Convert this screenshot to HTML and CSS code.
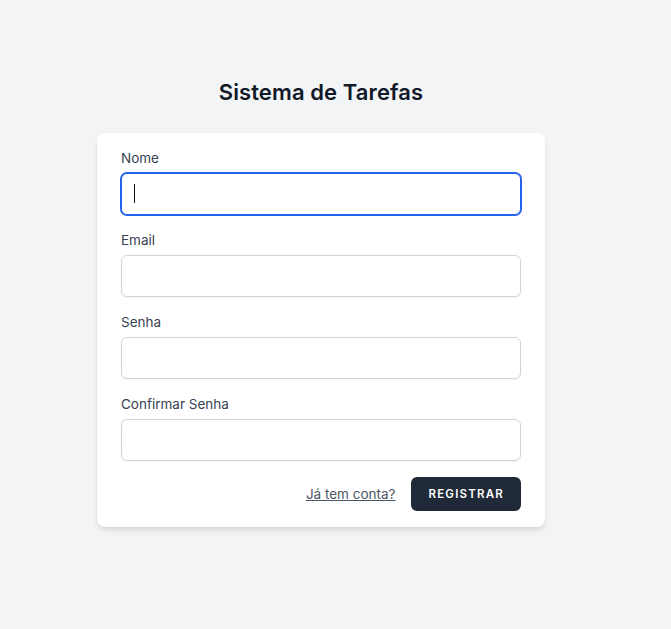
FILE: index.html
```html
<!DOCTYPE html>
<html lang="pt">
<head>
<meta charset="utf-8">
<title>Sistema de Tarefas</title>
<link rel="stylesheet" href="styles.css">
</head>
<body>
<div class="page">
  <h1 class="title">Sistema de Tarefas</h1>
  <form class="card">
    <div class="field">
      <label class="label" for="name">Nome</label>
      <input class="input input-focus" id="name" type="text">
    </div>
    <div class="field">
      <label class="label" for="email">Email</label>
      <input class="input" id="email" type="email">
    </div>
    <div class="field">
      <label class="label" for="password">Senha</label>
      <input class="input" id="password" type="password">
    </div>
    <div class="field">
      <label class="label" for="password2">Confirmar Senha</label>
      <input class="input" id="password2" type="password">
    </div>
    <div class="actions">
      <a class="link" href="#">Já tem conta?</a>
      <button class="btn" type="button">Registrar</button>
    </div>
  </form>
</div>
</body>
</html>
```

FILE: styles.css
```css
* { box-sizing: border-box; }
html, body { margin: 0; padding: 0; }
body {
  background: #f3f4f6;
  font-family: Inter, "Noto Sans", sans-serif;
  color: #111827;
  min-height: 629px;
}
.page {
  width: 642px;
  display: flex;
  flex-direction: column;
  align-items: center;
  padding-top: 77px;
}
.title {
  margin: 0 0 24px;
  font-size: 22px;
  line-height: 31px;
  font-weight: 600;
  color: #111827;
  letter-spacing: 0.1px;
}
.card {
  width: 448px;
  background: #fff;
  border-radius: 8px;
  box-shadow: 0 4px 6px -1px rgba(0,0,0,0.1), 0 2px 4px -2px rgba(0,0,0,0.1);
  padding: 16px 24px;
  margin-top: 1px;
  display: flex;
  flex-direction: column;
  gap: 16px;
}
.field { display: flex; flex-direction: column; gap: 4px; }
.label {
  font-size: 13.5px;
  line-height: 18px;
  margin-bottom: 2px;
  font-weight: 400;
  color: #374151;
}
.input {
  height: 42px;
  border: 1px solid #d1d5db;
  border-radius: 6px;
  box-shadow: 0 1px 2px rgba(0,0,0,0.05);
  font: inherit;
  padding: 8px 12px;
  outline: none;
  background: #fff;
}
.input-focus {
  border-color: #2563eb;
  box-shadow: 0 0 0 1px #2563eb;
  caret-color: #000;
  background-image: linear-gradient(#111, #111);
  background-repeat: no-repeat;
  background-size: 1px 19px;
  background-position: 12px 10px;
}
.actions {
  display: flex;
  justify-content: flex-end;
  align-items: center;
  gap: 16px;
}
.link {
  font-size: 13.5px;
  line-height: 20px;
  color: #4b5563;
  text-decoration: underline;
}
.btn {
  height: 34px;
  padding: 0 16px;
  background: #1f2937;
  color: #fff;
  border: 1px solid transparent;
  border-radius: 6px;
  font-family: inherit;
  font-size: 11.5px;
  font-weight: 600;
  letter-spacing: 1.2px;
  text-transform: uppercase;
}
```
